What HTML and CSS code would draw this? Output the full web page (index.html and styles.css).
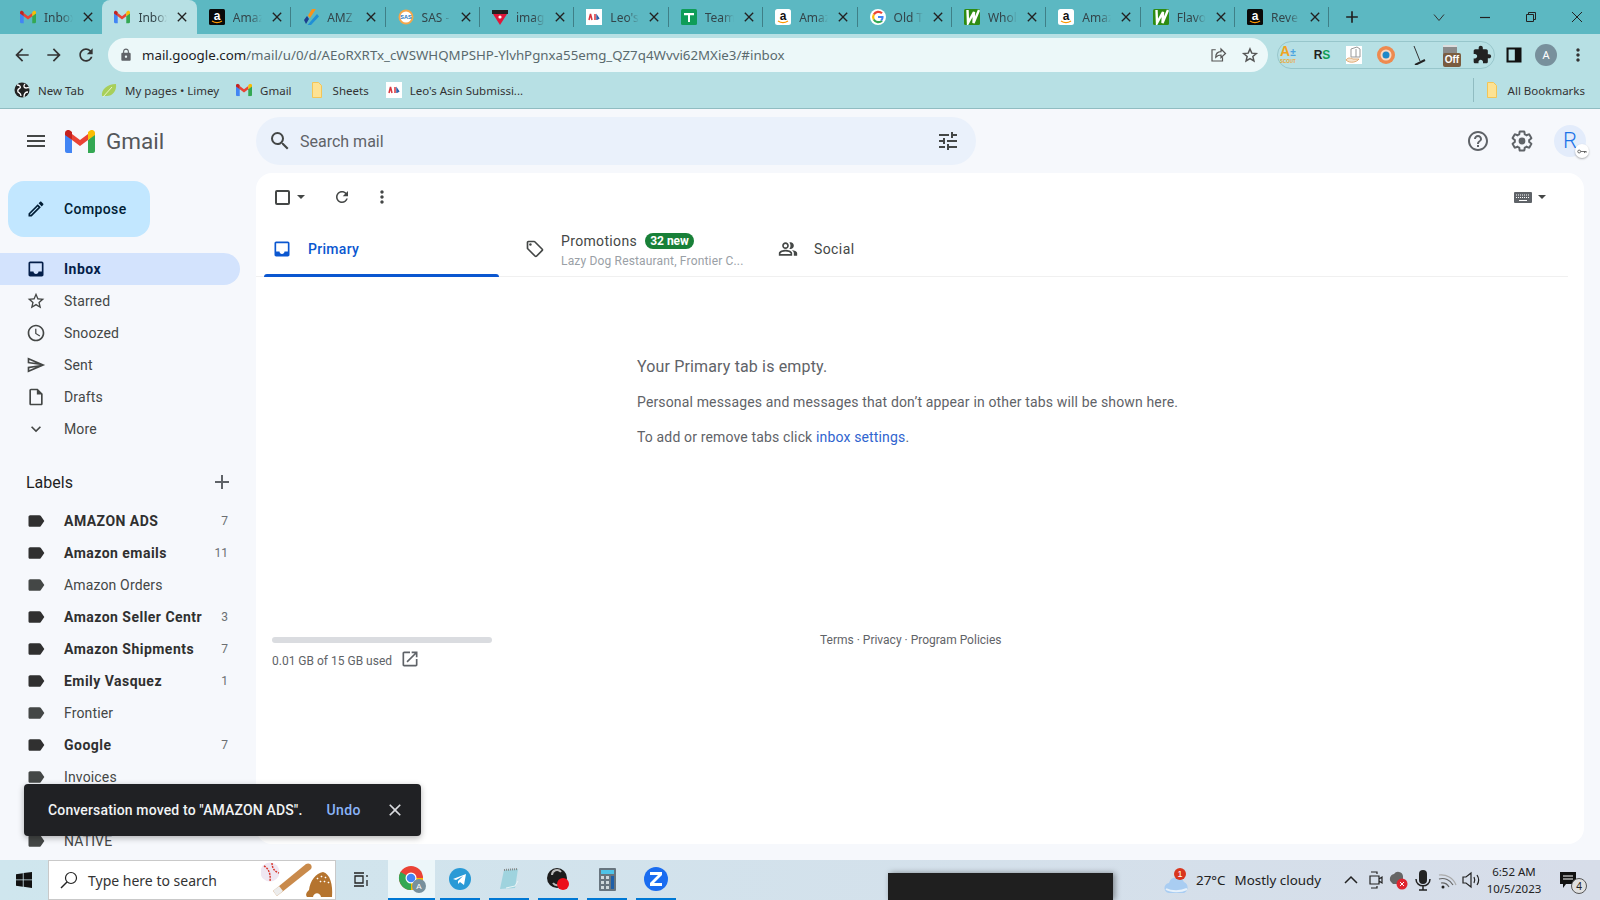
FILE: index.html
```html
<!DOCTYPE html>
<html lang="en">
<head>
    <meta charset="UTF-8">
    <title>Inbox - Gmail</title>
    <link rel="stylesheet" href="styles.css">
</head>
<body>
    <!-- icon sheet -->
    <svg class="icon-sheet" xmlns="http://www.w3.org/2000/svg">
        <symbol id="i-menu" viewBox="0 0 24 24"><path d="M3 18h18v-2H3v2zm0-5h18v-2H3v2zm0-7v2h18V6H3z"/></symbol>
        <symbol id="i-search" viewBox="0 0 24 24"><path d="M15.5 14h-.79l-.28-.27A6.471 6.471 0 0 0 16 9.5 6.5 6.5 0 1 0 9.5 16c1.61 0 3.09-.59 4.23-1.57l.27.28v.79l5 4.99L20.49 19l-4.99-5zm-6 0C7.01 14 5 11.99 5 9.5S7.01 5 9.5 5 14 7.01 14 9.5 11.99 14 9.5 14z"/></symbol>
        <symbol id="i-tune" viewBox="0 0 24 24"><path d="M3 17v2h6v-2H3zM3 5v2h10V5H3zm10 16v-2h8v-2h-8v-2h-2v6h2zM7 9v2H3v2h4v2h2V9H7zm14 4v-2H11v2h10zm-6-4h2V7h4V5h-4V3h-2v6z"/></symbol>
        <symbol id="i-edit" viewBox="0 0 24 24"><path d="M14.06 9.02l.92.92L5.92 19H5v-.92l9.06-9.06M17.66 3c-.25 0-.51.1-.7.29l-1.83 1.83 3.75 3.75 1.83-1.83c.39-.39.39-1.02 0-1.41l-2.34-2.34c-.2-.2-.45-.29-.71-.29zm-3.6 3.19L3 17.25V21h3.75L17.81 9.94l-3.75-3.75z"/></symbol>
        <symbol id="i-inbox" viewBox="0 0 24 24"><path d="M19 3H5c-1.1 0-2 .9-2 2v14c0 1.1.9 2 2 2h14c1.1 0 2-.9 2-2V5c0-1.1-.9-2-2-2zm0 12h-4c0 1.66-1.35 3-3 3s-3-1.34-3-3H5V5h14v10z"/></symbol>
        <symbol id="i-star" viewBox="0 0 24 24"><path d="M22 9.24l-7.19-.62L12 2 9.19 8.63 2 9.24l5.46 4.73L5.82 21 12 17.27 18.18 21l-1.63-7.03L22 9.24zM12 15.4l-3.76 2.27 1-4.28-3.32-2.88 4.38-.38L12 6.1l1.71 4.04 4.38.38-3.32 2.88 1 4.28L12 15.4z"/></symbol>
        <symbol id="i-clock" viewBox="0 0 24 24"><path d="M11.99 2C6.47 2 2 6.48 2 12s4.47 10 9.99 10C17.52 22 22 17.52 22 12S17.52 2 11.99 2zM12 20c-4.42 0-8-3.58-8-8s3.58-8 8-8 8 3.58 8 8-3.58 8-8 8zm.5-13H11v6l5.25 3.15.75-1.23-4.5-2.67z"/></symbol>
        <symbol id="i-send" viewBox="0 0 24 24"><path d="M4.01 6.03l7.51 3.22-7.52-1 .01-2.22m7.5 8.72L4 17.97v-2.22l7.51-1M2.01 3L2 10l15 2-15 2 .01 7L23 12 2.01 3z"/></symbol>
        <symbol id="i-draft" viewBox="0 0 24 24"><path d="M14 2H6c-1.1 0-1.99.9-1.99 2L4 20c0 1.1.89 2 1.99 2H18c1.1 0 2-.9 2-2V8l-6-6zM6 20V4h7v5h5v11H6z"/></symbol>
        <symbol id="i-expand" viewBox="0 0 24 24"><path d="M16.59 8.59L12 13.17 7.41 8.59 6 10l6 6 6-6z"/></symbol>
        <symbol id="i-label" viewBox="0 0 24 24"><path d="M17.63 5.84C17.27 5.33 16.67 5 16 5L5 5.01C3.9 5.01 3 5.9 3 7v10c0 1.1.9 1.99 2 1.99L16 19c.67 0 1.27-.33 1.63-.84L22 12l-4.37-6.16z"/></symbol>
        <symbol id="i-add" viewBox="0 0 24 24"><path d="M19 13h-6v6h-2v-6H5v-2h6V5h2v6h6v2z"/></symbol>
        <symbol id="i-close" viewBox="0 0 24 24"><path d="M19 6.41L17.59 5 12 10.59 6.41 5 5 6.41 10.59 12 5 17.59 6.41 19 12 13.41 17.59 19 19 17.59 13.41 12z"/></symbol>
        <symbol id="i-refresh" viewBox="0 0 24 24"><path d="M17.65 6.35C16.2 4.9 14.21 4 12 4c-4.42 0-7.99 3.58-7.99 8s3.57 8 7.99 8c3.73 0 6.84-2.55 7.73-6h-2.08c-.82 2.33-3.04 4-5.65 4-3.31 0-6-2.69-6-6s2.69-6 6-6c1.66 0 3.14.69 4.22 1.78L13 11h7V4l-2.35 2.35z"/></symbol>
        <symbol id="i-dots" viewBox="0 0 24 24"><path d="M12 8c1.1 0 2-.9 2-2s-.9-2-2-2-2 .9-2 2 .9 2 2 2zm0 2c-1.1 0-2 .9-2 2s.9 2 2 2 2-.9 2-2-.9-2-2-2zm0 6c-1.1 0-2 .9-2 2s.9 2 2 2 2-.9 2-2-.9-2-2-2z"/></symbol>
        <symbol id="i-tag" viewBox="0 0 24 24"><path d="M21.41 11.58l-9-9C12.05 2.22 11.55 2 11 2H4c-1.1 0-2 .9-2 2v7c0 .55.22 1.05.59 1.42l9 9c.36.36.86.58 1.41.58s1.05-.22 1.41-.59l7-7c.37-.36.59-.86.59-1.41s-.23-1.06-.59-1.42zM13 20.01L4 11V4h7v-.01l9 9-7 7.02z"/><circle cx="6.5" cy="6.5" r="1.5"/></symbol>
        <symbol id="i-people" viewBox="0 0 24 24"><path d="M16.67 13.13C18.04 14.06 19 15.32 19 17v3h4v-3c0-2.18-3.57-3.47-6.33-3.87zM15 12c2.21 0 4-1.79 4-4s-1.79-4-4-4c-.47 0-.91.1-1.33.24C14.5 5.27 15 6.58 15 8s-.5 2.73-1.33 3.76c.42.14.86.24 1.33.24zM9 12c2.21 0 4-1.79 4-4s-1.79-4-4-4-4 1.79-4 4 1.79 4 4 4zm0-6c1.1 0 2 .9 2 2s-.9 2-2 2-2-.9-2-2 .9-2 2-2zM9 13c-2.67 0-8 1.34-8 4v3h16v-3c0-2.66-5.33-4-8-4zm6 5H3v-.99C3.2 16.29 6.3 15 9 15s5.8 1.29 6 2v1z"/></symbol>
        <symbol id="i-help" viewBox="0 0 24 24"><path d="M11 18h2v-2h-2v2zm1-16C6.48 2 2 6.48 2 12s4.48 10 10 10 10-4.48 10-10S17.52 2 12 2zm0 18c-4.41 0-8-3.59-8-8s3.59-8 8-8 8 3.59 8 8-3.59 8-8 8zm0-14c-2.21 0-4 1.79-4 4h2c0-1.1.9-2 2-2s2 .9 2 2c0 2-3 1.75-3 5h2c0-2.25 3-2.5 3-5 0-2.21-1.79-4-4-4z"/></symbol>
        <symbol id="i-gear" viewBox="0 0 24 24"><path fill="none" stroke="currentColor" stroke-width="2" d="M19.14 12.94c.04-.3.06-.61.06-.94 0-.32-.02-.64-.07-.94l2.03-1.58c.18-.14.23-.41.12-.61l-1.92-3.32c-.12-.22-.37-.29-.59-.22l-2.39.96c-.5-.38-1.03-.7-1.62-.94l-.36-2.54c-.04-.24-.24-.41-.48-.41h-3.84c-.24 0-.43.17-.47.41l-.36 2.54c-.59.24-1.13.57-1.62.94l-2.39-.96c-.22-.08-.47 0-.59.22L2.74 8.87c-.12.21-.08.47.12.61l2.03 1.58c-.05.3-.09.63-.09.94s.02.64.07.94l-2.03 1.58c-.18.14-.23.41-.12.61l1.92 3.32c.12.22.37.29.59.22l2.39-.96c.5.38 1.03.7 1.62.94l.36 2.54c.05.24.24.41.48.41h3.84c.24 0 .44-.17.47-.41l.36-2.54c.59-.24 1.13-.56 1.62-.94l2.39.96c.22.08.47 0 .59-.22l1.92-3.32c.12-.22.07-.47-.12-.61l-2.01-1.58z"/><circle cx="12" cy="12" r="3.4"/></symbol>
        <symbol id="i-open" viewBox="0 0 24 24"><path d="M19 19H5V5h7V3H5c-1.11 0-2 .9-2 2v14c0 1.1.89 2 2 2h14c1.1 0 2-.9 2-2v-7h-2v7zM14 3v2h3.59l-9.83 9.83 1.41 1.41L19 6.41V10h2V3h-7z"/></symbol>
        <symbol id="i-back" viewBox="0 0 24 24"><path d="M20 11H7.83l5.59-5.59L12 4l-8 8 8 8 1.41-1.41L7.83 13H20v-2z"/></symbol>
        <symbol id="i-forward" viewBox="0 0 24 24"><path d="M12 4l-1.41 1.41L16.17 11H4v2h12.17l-5.58 5.59L12 20l8-8z"/></symbol>
        <symbol id="i-lock" viewBox="0 0 24 24"><path d="M18 8h-1V6c0-2.76-2.24-5-5-5S7 3.24 7 6v2H6c-1.1 0-2 .9-2 2v10c0 1.1.9 2 2 2h12c1.1 0 2-.9 2-2V10c0-1.1-.9-2-2-2zm-6 9c-1.1 0-2-.9-2-2s.9-2 2-2 2 .9 2 2-.9 2-2 2zm3.1-9H8.9V6c0-1.71 1.39-3.1 3.1-3.1 1.71 0 3.1 1.39 3.1 3.1v2z"/></symbol>
        <symbol id="i-puzzle" viewBox="0 0 24 24"><path d="M20.5 11H19V7c0-1.1-.9-2-2-2h-4V3.5C13 2.12 11.88 1 10.5 1S8 2.12 8 3.5V5H4c-1.1 0-1.99.9-1.99 2v3.8H3.5c1.49 0 2.7 1.21 2.7 2.7s-1.21 2.7-2.7 2.7H2V20c0 1.1.9 2 2 2h3.8v-1.5c0-1.49 1.21-2.7 2.7-2.7 1.49 0 2.7 1.21 2.7 2.7V22H17c1.1 0 2-.9 2-2v-4h1.5c1.38 0 2.5-1.12 2.5-2.5S21.88 11 20.5 11z"/></symbol>
        <symbol id="i-share" viewBox="0 0 24 24"><path fill="none" stroke="currentColor" stroke-width="1.6" d="M9 5H4v15h14v-5M9 15c0-5 3-7.500 7-7.500V4l6 6-6 5.500V12c-3 0-5 1-7 3z"/></symbol>
        <symbol id="i-star-line" viewBox="0 0 24 24"><path fill="none" stroke="currentColor" stroke-width="2" d="M12 4l2.400 5.500 6 .5-4.600 4 1.400 5.900L12 16.800 6.800 19.900 8.200 14 3.600 10l6-.5z"/></symbol>
        <symbol id="i-panel" viewBox="0 0 24 24"><path fill-rule="evenodd" d="M3 3h18v18H3zM5.500 5.500v13H13v-13z"/></symbol>

        <symbol id="f-gmail" viewBox="0 0 30 23">
            <path fill="#4285f4" d="M0 3v18c0 1 1 2 2 2h5V10z"/>
            <path fill="#34a853" d="M30 3v18c0 1-1 2-2 2h-5V10z"/>
            <path fill="#ea4335" d="M7 10v-6l8 6 8-6v6l-8 6z"/>
            <path fill="#c5221f" d="M0 3C0 .5 3-1 5 .5L7 2v8L0 5z"/>
            <path fill="#fbbc04" d="M30 3c0-2.500-3-4-5-2.500L23 2v8l7-5z"/>
        </symbol>
        <symbol id="f-amz-dark" viewBox="0 0 16 16">
            <rect width="16" height="16" rx="1.500" fill="#0a0a0a"/>
            <text x="8" y="10.500" font-size="12" font-weight="700" text-anchor="middle" fill="#fff" font-family="Liberation Sans">a</text>
            <path d="M3 12c3 2 7 2 10 0" fill="none" stroke="#f90" stroke-width="1.300"/>
        </symbol>
        <symbol id="f-amz-light" viewBox="0 0 16 16">
            <rect width="16" height="16" rx="2.500" fill="#fff"/>
            <text x="8" y="10.500" font-size="12" font-weight="700" text-anchor="middle" fill="#111" font-family="Liberation Sans">a</text>
            <path d="M3 12c3 2 7 2 10 0" fill="none" stroke="#f90" stroke-width="1.300"/>
        </symbol>
        <symbol id="f-amz-tool" viewBox="0 0 16 16">
            <path fill="#f7941d" d="M9 0h4L7 9 5 6.500z"/>
            <path fill="#1f8fd6" d="M14 5l2 2.500L8 16H4.500z"/>
            <path fill="#1b3f8f" d="M1 11l3-4 2 3-3 5z"/>
        </symbol>
        <symbol id="f-sas" viewBox="0 0 16 16">
            <circle cx="8" cy="8" r="7.500" fill="#f4a64a"/>
            <circle cx="8" cy="8" r="5.600" fill="#fff"/>
            <text x="8" y="10" font-size="5.500" font-weight="700" text-anchor="middle" fill="#1d75bc" font-family="Liberation Sans">SAS</text>
        </symbol>
        <symbol id="f-imag" viewBox="0 0 16 16">
            <path fill="#e0163a" d="M1 5h14L8 16z"/>
            <path fill="#231f20" d="M0 1h16v4H0z"/>
            <circle cx="8" cy="8" r="1.600" fill="#fff"/>
        </symbol>
        <symbol id="f-leo" viewBox="0 0 16 16">
            <rect width="16" height="16" fill="#fff"/>
            <path d="M3 11l1.500-6L6 11M9 5v6" fill="none" stroke="#d9363e" stroke-width="1.500"/>
            <path d="M11 11V7l2 3" fill="none" stroke="#2b5fa8" stroke-width="1.500"/>
        </symbol>
        <symbol id="f-team" viewBox="0 0 16 16">
            <rect width="16" height="16" rx="1.500" fill="#0f9d58"/>
            <path fill="#fff" d="M3 4h10v2.200H9V13H7V6.200H3z"/>
        </symbol>
        <symbol id="f-google" viewBox="0 0 16 16">
            <circle cx="8" cy="8" r="8" fill="#fff"/>
            <path fill="none" stroke="#ea4335" stroke-width="2.200" d="M12 4.300A5.200 5.200 0 0 0 3.800 5.500"/>
            <path fill="none" stroke="#fbbc04" stroke-width="2.200" d="M3.800 5.500a5.200 5.200 0 0 0 0 5"/>
            <path fill="none" stroke="#34a853" stroke-width="2.200" d="M3.800 10.500a5.200 5.200 0 0 0 8.200 1.200"/>
            <path fill="#4285f4" d="M8 7h5.500c.3 2-.3 3.700-1.500 5l-1.600-1.300c.6-.5 1-1.200 1.100-1.800H8z"/>
        </symbol>
        <symbol id="f-whole" viewBox="0 0 16 16">
            <rect width="16" height="16" rx="1.500" fill="#2e8b12"/>
            <path fill="none" stroke="#fff" stroke-width="2.400" d="M3.500 1L4 14 10 3l-.5 11L15 1"/>
        </symbol>
        <symbol id="f-folder" viewBox="0 0 16 16">
            <path fill="#fde293" stroke="#f3c557" d="M3.500 .5h6l3 3v12h-9z"/>
        </symbol>
    </svg>

    <!-- chrome tabs -->
    <div class="tabstrip">
        <div class="browser-tab"><svg class="fav"><use href="#f-gmail"/></svg><span class="tab-title">Inbox</span><svg class="tab-x"><use href="#i-close"/></svg></div>
        <div class="browser-tab is-active"><svg class="fav"><use href="#f-gmail"/></svg><span class="tab-title">Inbox</span><svg class="tab-x"><use href="#i-close"/></svg></div>
        <div class="browser-tab"><svg class="fav"><use href="#f-amz-dark"/></svg><span class="tab-title">Amaz</span><svg class="tab-x"><use href="#i-close"/></svg></div>
        <div class="browser-tab"><svg class="fav"><use href="#f-amz-tool"/></svg><span class="tab-title">AMZ</span><svg class="tab-x"><use href="#i-close"/></svg></div>
        <div class="browser-tab"><svg class="fav"><use href="#f-sas"/></svg><span class="tab-title">SAS -</span><svg class="tab-x"><use href="#i-close"/></svg></div>
        <div class="browser-tab"><svg class="fav"><use href="#f-imag"/></svg><span class="tab-title">imag</span><svg class="tab-x"><use href="#i-close"/></svg></div>
        <div class="browser-tab"><svg class="fav"><use href="#f-leo"/></svg><span class="tab-title">Leo's</span><svg class="tab-x"><use href="#i-close"/></svg></div>
        <div class="browser-tab"><svg class="fav"><use href="#f-team"/></svg><span class="tab-title">Team</span><svg class="tab-x"><use href="#i-close"/></svg></div>
        <div class="browser-tab"><svg class="fav"><use href="#f-amz-light"/></svg><span class="tab-title">Amaz</span><svg class="tab-x"><use href="#i-close"/></svg></div>
        <div class="browser-tab"><svg class="fav"><use href="#f-google"/></svg><span class="tab-title">Old T</span><svg class="tab-x"><use href="#i-close"/></svg></div>
        <div class="browser-tab"><svg class="fav"><use href="#f-whole"/></svg><span class="tab-title">Whol</span><svg class="tab-x"><use href="#i-close"/></svg></div>
        <div class="browser-tab"><svg class="fav"><use href="#f-amz-light"/></svg><span class="tab-title">Amaz</span><svg class="tab-x"><use href="#i-close"/></svg></div>
        <div class="browser-tab"><svg class="fav"><use href="#f-whole"/></svg><span class="tab-title">Flavo</span><svg class="tab-x"><use href="#i-close"/></svg></div>
        <div class="browser-tab"><svg class="fav"><use href="#f-amz-dark"/></svg><span class="tab-title">Reve</span><svg class="tab-x"><use href="#i-close"/></svg></div>
        <svg class="new-tab"><use href="#i-add"/></svg>
        <div class="window-controls">
            <svg viewBox="0 0 12 12"><path d="M1 3.500l5 6 5-6" fill="none" stroke="#333"/></svg>
            <svg viewBox="0 0 12 12"><path d="M1 6.500h10" stroke="#222" stroke-width="1.200"/></svg>
            <svg viewBox="0 0 12 12"><path d="M1.500 3.500h7v7h-7zM3.500 3.500v-2h7v7h-2" fill="none" stroke="#222"/></svg>
            <svg viewBox="0 0 12 12"><path d="M1 1l10 10M11 1L1 11" stroke="#222"/></svg>
        </div>
    </div>

    <!-- address bar -->
    <div class="toolbar">
        <svg class="nav-btn"><use href="#i-back"/></svg>
        <svg class="nav-btn"><use href="#i-forward"/></svg>
        <svg class="nav-btn"><use href="#i-refresh"/></svg>
        <div class="address">
            <svg class="lock"><use href="#i-lock"/></svg>
            <span class="url"><b>mail.google.com</b>/mail/u/0/d/AEoRXRTx_cWSWHQMPSHP-YlvhPgnxa55emg_QZ7q4Wvvi62MXie3/#inbox</span>
            <svg class="addr-icon"><use href="#i-share"/></svg>
            <svg class="addr-icon"><use href="#i-star-line"/></svg>
        </div>
        <div class="extensions">
            <span class="ext ext-ascout">A<em>±</em><small>SCOUT</small></span>
            <span class="ext ext-rs">R<i>S</i></span>
            <svg class="ext" viewBox="0 0 20 20"><rect x="2" y="1" width="16" height="18" fill="#fff"/><path d="M7 4l6-2 3 2v8H7z" fill="#fff" stroke="#999"/><path d="M12 4v8" stroke="#999"/><path d="M2 15c2-3 5-2 7-1h6c-2 3-9 5-13 1z" fill="#f6e3cd" stroke="#d99a5a" stroke-width=".8"/></svg>
            <svg class="ext" viewBox="0 0 20 20"><circle cx="10" cy="10" r="9" fill="#ee8a4f"/><circle cx="10" cy="10" r="5.500" fill="#f7d9c4"/><circle cx="10" cy="10" r="3.500" fill="#1e88c9"/></svg>
            <svg class="ext" viewBox="0 0 20 20"><path d="M6 1l6 15" stroke="#333"/><path d="M7 20l10-5" stroke="#222" stroke-width="2"/></svg>
            <span class="ext ext-off"><span class="cup"></span><span class="off">Off</span></span>
            <svg class="ext ext-puzzle"><use href="#i-puzzle"/></svg>
        </div>
        <svg class="nav-btn panel-btn"><use href="#i-panel"/></svg>
        <span class="chrome-avatar">A</span>
        <svg class="nav-btn"><use href="#i-dots"/></svg>
    </div>

    <!-- bookmarks -->
    <div class="bookmarks">
        <span class="bm"><svg viewBox="0 0 16 16"><circle cx="8" cy="8" r="7.500" fill="#222"/><path d="M3 3c3 0 4 2 3 3S3 7 4 10c1 1 3 1 3 4M11 2c-2 2-1 4 1 4s2-1 3 0M10 15c0-3 1-5 4-5" fill="none" stroke="#fff" stroke-width="1.300"/></svg>New Tab</span>
        <span class="bm"><svg viewBox="0 0 16 16"><path d="M1 14C0 8 6 2 15 2c1 7-4 13-11 12z" fill="#a8cf5a"/><path d="M2 15L11 5" stroke="#e8f5c8"/></svg>My pages • Limey</span>
        <span class="bm"><svg viewBox="0 0 30 23"><use href="#f-gmail"/></svg>Gmail</span>
        <span class="bm"><svg><use href="#f-folder"/></svg>Sheets</span>
        <span class="bm"><svg><use href="#f-leo"/></svg>Leo's Asin Submissi...</span>
        <span class="bm bm-all"><svg><use href="#f-folder"/></svg>All Bookmarks</span>
    </div>

    <div class="gmail">
        <header class="gm-header">
            <div class="brand">
                <svg class="hamburger"><use href="#i-menu"/></svg>
                <svg class="logo"><use href="#f-gmail"/></svg>
                <span class="wordmark">Gmail</span>
            </div>
            <div class="searchbar">
                <svg class="search-icon"><use href="#i-search"/></svg>
                <span class="search-text">Search mail</span>
                <svg class="tune-icon"><use href="#i-tune"/></svg>
            </div>
            <div class="account">
                <svg class="acct-icon"><use href="#i-help"/></svg>
                <svg class="acct-icon"><use href="#i-gear"/></svg>
                <span class="avatar">R
                    <span class="key"><svg viewBox="0 0 16 8"><circle cx="3.500" cy="4" r="2.300" fill="none" stroke="#444" stroke-width="1.200"/><path d="M6 4h9M12 4v2.500M14.500 4v2" stroke="#444" stroke-width="1.200"/></svg></span>
                </span>
            </div>
        </header>

        <div class="gm-body">
            <aside class="sidebar">
                <button class="compose"><svg><use href="#i-edit"/></svg>Compose</button>
                <ul class="nav-list">
                    <li class="nav-row is-current"><svg><use href="#i-inbox"/></svg>Inbox</li>
                    <li class="nav-row"><svg><use href="#i-star"/></svg>Starred</li>
                    <li class="nav-row"><svg><use href="#i-clock"/></svg>Snoozed</li>
                    <li class="nav-row"><svg><use href="#i-send"/></svg>Sent</li>
                    <li class="nav-row"><svg><use href="#i-draft"/></svg>Drafts</li>
                    <li class="nav-row"><svg><use href="#i-expand"/></svg>More</li>
                </ul>
                <div class="labels-head"><span>Labels</span><svg><use href="#i-add"/></svg></div>
                <ul class="nav-list">
                    <li class="nav-row unread"><svg><use href="#i-label"/></svg>AMAZON ADS<span class="count">7</span></li>
                    <li class="nav-row unread"><svg><use href="#i-label"/></svg>Amazon emails<span class="count">11</span></li>
                    <li class="nav-row"><svg><use href="#i-label"/></svg>Amazon Orders</li>
                    <li class="nav-row unread"><svg><use href="#i-label"/></svg>Amazon Seller Centr<span class="count">3</span></li>
                    <li class="nav-row unread"><svg><use href="#i-label"/></svg>Amazon Shipments<span class="count">7</span></li>
                    <li class="nav-row unread"><svg><use href="#i-label"/></svg>Emily Vasquez<span class="count">1</span></li>
                    <li class="nav-row"><svg><use href="#i-label"/></svg>Frontier</li>
                    <li class="nav-row unread"><svg><use href="#i-label"/></svg>Google<span class="count">7</span></li>
                    <li class="nav-row"><svg><use href="#i-label"/></svg>Invoices</li>
                    <li class="nav-row"></li>
                    <li class="nav-row"><svg><use href="#i-label"/></svg>NATIVE</li>
                </ul>
            </aside>

            <main class="panel">
                <div class="mail-tools">
                    <span class="checkbox"></span>
                    <span class="caret"></span>
                    <svg class="refresh"><use href="#i-refresh"/></svg>
                    <svg class="more"><use href="#i-dots"/></svg>
                    <span class="kbd">
                        <svg viewBox="0 0 18 11"><rect width="18" height="11" rx="1" fill="#5f6368"/><path d="M2 3h14M2 5.500h14" stroke="#fff" stroke-width="1" stroke-dasharray="1 1"/><path d="M5 8.500h8" stroke="#fff"/></svg>
                        <span class="caret"></span>
                    </span>
                </div>
                <div class="mail-tabs">
                    <div class="mail-tab tab-primary"><svg><use href="#i-inbox"/></svg><span>Primary</span></div>
                    <div class="mail-tab tab-promo">
                        <svg><use href="#i-tag"/></svg>
                        <div class="promo-text">
                            <div class="promo-top"><span>Promotions</span><span class="badge">32 new</span></div>
                            <div class="promo-sub">Lazy Dog Restaurant, Frontier C...</div>
                        </div>
                    </div>
                    <div class="mail-tab tab-social"><svg><use href="#i-people"/></svg><span>Social</span></div>
                </div>
                <div class="empty">
                    <h2>Your Primary tab is empty.</h2>
                    <p>Personal messages and messages that don’t appear in other tabs will be shown here.</p>
                    <p class="second">To add or remove tabs click <a href="#">inbox settings</a>.</p>
                </div>
                <div class="mail-foot">
                    <div class="storage">
                        <div class="storage-bar"></div>
                        <div class="storage-text">0.01 GB of 15 GB used<svg><use href="#i-open"/></svg></div>
                    </div>
                    <div class="foot-links">Terms · Privacy · Program Policies</div>
                </div>
            </main>
        </div>

        <div class="toast">
            <span>Conversation moved to "AMAZON ADS".</span>
            <a href="#">Undo</a>
            <svg><use href="#i-close"/></svg>
        </div>
    </div>

    <!-- windows taskbar -->
    <footer class="taskbar">
        <div class="start"><svg viewBox="0 0 16 16"><path d="M0 2.200l6.800-1v6.300H0zM7.600 1.100L16 0v7.500H7.600zM0 8.300h6.800v6.500l-6.800-1zM7.600 8.300H16V16l-8.400-1.200z"/></svg></div>
        <div class="win-search">
            <svg class="win-glass" viewBox="0 0 18 18"><circle cx="11" cy="7" r="5.500" fill="none" stroke="#222" stroke-width="1.200"/><path d="M7 11l-6 6" stroke="#222" stroke-width="1.400"/></svg>
            <span>Type here to search</span>
            <svg class="doodle" viewBox="0 0 72 40">
                <circle cx="9" cy="12" r="9.500" fill="#efe7f2"/>
                <path d="M3 6c4 2 7 7 6 15M11 3c0 5 3 9 7 10" fill="none" stroke="#d8352a" stroke-width="1.400" stroke-dasharray="2 1"/>
                <path d="M12 31l4 5 34-27c2-3-1-7-5-5z" fill="#c98a4b"/>
                <path d="M12 31l4 5 6-5-4-5z" fill="#ececec"/>
                <path d="M46 37c-2-3 0-5 2-7 1-9 7-17 14-18 7 2 10 12 9 25H60c-1-5-7-5-8 0z" fill="#b5742f"/>
                <path d="M56 18l1 1M60 16l1 1M64 17l1 1M59 21l1 1M63 21l1 1M67 22l1 1" stroke="#fff" stroke-width="1.600"/>
            </svg>
        </div>
        <div class="taskview"><svg viewBox="0 0 20 20"><path d="M4 3h10M4 16h10M5 6h8v7H5zM17 5v2M17 10v6" fill="none" stroke="#222" stroke-width="1.300"/></svg></div>
        <div class="app app-active">
            <svg viewBox="0 0 28 28">
                <circle cx="13" cy="13" r="12" fill="#ea4335"/>
                <path d="M13 13L2.600 7A12 12 0 0 0 13 25z" fill="#34a853"/>
                <path d="M13 13h12a12 12 0 0 1-12 12z" fill="#fbbc04"/>
                <circle cx="13" cy="13" r="5.500" fill="#fff"/><circle cx="13" cy="13" r="4.300" fill="#4285f4"/>
                <circle cx="21" cy="21" r="7" fill="#78909c"/>
                <text x="21" y="24" font-size="8" text-anchor="middle" fill="#fff" font-family="Liberation Sans">A</text>
            </svg>
        </div>
        <div class="app"><svg viewBox="0 0 24 24"><circle cx="12" cy="12" r="11" fill="#2a9ad6"/><path d="M5 12l13-5-2 11-4-3-2 2v-3l5-5-7 4z" fill="#fff"/></svg></div>
        <div class="app"><svg viewBox="0 0 24 24"><path d="M7 3l14-1-3 19-15 1z" fill="#9fd3de"/><path d="M7 3l14-1" stroke="#888" stroke-width="2" stroke-dasharray="1 1"/><path d="M9 21l9-2 3-5" fill="none" stroke="#e8f4f6"/></svg></div>
        <div class="app"><svg viewBox="0 0 24 24"><circle cx="11" cy="11" r="10" fill="#1c1c1c"/><path d="M6 8a5 5 0 0 1 9-3M16 14a5 5 0 0 1-9 2" fill="none" stroke="#bbb" stroke-width="2"/><circle cx="17" cy="17" r="6" fill="#ec0f1a"/></svg></div>
        <div class="app"><svg viewBox="0 0 24 24"><rect x="4" y="1" width="17" height="23" rx="1" fill="#68757f"/><rect x="6" y="3" width="13" height="4" fill="#4fc3e8"/><path d="M6 9h3v3H6zM11 9h3v3h-3zM6 14h3v3H6zM11 14h3v3h-3zM6 19h3v3H6zM11 19h3v3h-3z" fill="#cfd8dc"/><path d="M16 9h3v13h-3z" fill="#1e5fa8"/></svg></div>
        <div class="app"><svg viewBox="0 0 24 24"><circle cx="12" cy="12" r="12" fill="#1a6cf0"/><path d="M6 5h12v3l-8 8h8v3H6v-3l8-8H6z" fill="#fff"/></svg></div>

        <div class="desktop-thumb"></div>

        <div class="tray">
            <span class="weather">
                <svg viewBox="0 0 24 30"><path d="M6 28a5 5 0 0 1-1-10 8 8 0 0 1 15-1 6 6 0 0 1 0 11z" fill="#a9cdf2"/><path d="M2 24c5 3 15 3 21 0" fill="none" stroke="#e6f1fb" stroke-width="2"/><circle cx="16" cy="9" r="6" fill="#d9361e"/><text x="16" y="12" font-size="9" text-anchor="middle" fill="#fff" font-family="Liberation Sans">1</text></svg>
                <span class="temp">27°C</span>
                <span>Mostly cloudy</span>
            </span>
            <svg class="tray-icon" viewBox="0 0 24 24"><path d="M6 15l6-6 6 6" fill="none" stroke="#222" stroke-width="1.500"/></svg>
            <svg class="tray-icon" viewBox="0 0 24 24"><path d="M8 4h6v2M14 18v2H8M7 8h9v8H7zM16 11l3-2v6l-3-2" fill="none" stroke="#222" stroke-width="1.200"/></svg>
            <svg class="tray-icon" viewBox="0 0 24 24"><path d="M5 15a5 5 0 0 1 2-9 5 5 0 0 1 9 2v8H6z" fill="#666"/><circle cx="15" cy="16" r="5.500" fill="#e0252f"/><path d="M13 14l4 4M17 14l-4 4" stroke="#fff"/></svg>
            <svg class="tray-icon" viewBox="0 0 24 24"><rect x="8" y="2" width="8" height="14" rx="4" fill="#222"/><path d="M5 11c0 9 14 9 14 0M12 18v4M8 22h8" fill="none" stroke="#222" stroke-width="1.500"/></svg>
            <svg class="tray-icon" viewBox="0 0 24 24"><path d="M4 11a12 12 0 0 1 14 6M6 15a8 8 0 0 1 8 4" fill="none" stroke="#666" stroke-width="1.200"/><path d="M4 7a16 16 0 0 1 17 10" fill="none" stroke="#aaa" stroke-width="1.200"/><circle cx="8" cy="19" r="1.500" fill="#222"/></svg>
            <svg class="tray-icon" viewBox="0 0 24 24"><path d="M4 9h3l5-4v14l-5-4H4z" fill="none" stroke="#222" stroke-width="1.200"/><path d="M15 9c1 2 1 4 0 6M18 7c2 3 2 7 0 10" fill="none" stroke="#222" stroke-width="1.200"/></svg>
            <div class="clock"><span>6:52 AM</span><span>10/5/2023</span></div>
            <div class="notif">
                <svg viewBox="0 0 18 18"><path d="M1 1h16v12H7l-3 4v-4H1z" fill="#111"/><path d="M4 5h10M4 8h10" stroke="#fff"/></svg>
                <span class="notif-count">4</span>
            </div>
        </div>
    </footer>
</body>
</html>
```

FILE: styles.css
```css
* {
    box-sizing: border-box;
}

html, body {
    margin: 0;
    padding: 0;
    width: 1600px;
    height: 900px;
    overflow: hidden;
}

body {
    display: flex;
    flex-direction: column;
    font-family: Roboto, 'Liberation Sans', sans-serif;
    background-color: #f6f8fc;
    color: #444746;
}

svg {
    display: block;
    fill: currentColor;
    flex: none;
}

.icon-sheet {
    position: absolute;
    width: 0;
    height: 0;
}

/* Chrome tab strip */
.tabstrip {
    display: flex;
    align-items: center;
    height: 34px;
    padding-left: 8px;
    background-color: #5cb8c2;
    font-family: 'Noto Sans', sans-serif;
}

.browser-tab {
    display: flex;
    align-items: center;
    width: 94.4px;
    height: 34px;
    padding-left: 12px;
    flex: none;
    background: linear-gradient(#3f7f87, #3f7f87) right center / 1px 20px no-repeat;
}

.browser-tab:first-child {
    background: none;
}

.browser-tab.is-active {
    background: #b7e0e4;
    border-radius: 8px 8px 0 0;
}

.fav {
    width: 16px;
    height: 16px;
}

.tab-title {
    width: 29px;
    margin-left: 8px;
    font-size: 12px;
    white-space: nowrap;
    overflow: hidden;
    color: #33454a;
    -webkit-mask-image: linear-gradient(to right, #000 60%, transparent);
    mask-image: linear-gradient(to right, #000 60%, transparent);
}

.tab-x {
    width: 16px;
    height: 16px;
    margin-left: 7px;
    color: #222;
}

.new-tab {
    width: 20px;
    height: 20px;
    margin-left: 13px;
    color: #222;
}

.window-controls {
    display: flex;
    align-items: center;
    gap: 34px;
    margin-left: auto;
    padding-right: 17px;
}

.window-controls svg {
    width: 12px;
    height: 12px;
}

/* address bar */
.toolbar {
    display: flex;
    align-items: center;
    height: 40px;
    padding-top: 2px;
    padding-left: 6px;
    background-color: #b7e0e4;
    color: #333;
}

.nav-btn {
    width: 32px;
    height: 20px;
    color: #333;
}

.address {
    display: flex;
    align-items: center;
    width: 1160px;
    height: 34px;
    margin-left: 6px;
    padding: 0 9px 0 11px;
    background-color: #ecf8f9;
    border-radius: 17px;
}

.lock {
    width: 14px;
    height: 14px;
    color: #5f6368;
}

.url {
    flex: 1;
    margin-left: 9px;
    font-family: 'Noto Sans', sans-serif;
    font-size: 13.3px;
    color: #5a6a6e;
    white-space: nowrap;
}

.url b {
    font-weight: 400;
    color: #202124;
}

.addr-icon {
    width: 18px;
    height: 18px;
    margin-left: 14px;
    color: #555;
}

.extensions {
    display: flex;
    align-items: center;
    gap: 12px;
    width: 218px;
    height: 28px;
    margin: 0 3px 0 9px;
    padding-left: 2px;
    border: 1px solid #97c6cb;
    border-radius: 14px;
}

.ext {
    position: relative;
    display: block;
    width: 20px;
    height: 20px;
    flex: none;
}

.ext-ascout {
    font: 700 14px/13px 'Liberation Sans', sans-serif;
    color: #f0a41f;
    text-align: left;
}

.ext-ascout em {
    font-style: normal;
    font-size: 10px;
    color: #4aa3df;
}

.ext-ascout small {
    display: block;
    font-size: 4.5px;
    line-height: 5px;
}

.ext-rs {
    font: 700 12px/20px 'Liberation Sans', sans-serif;
    color: #222;
    text-align: center;
}

.ext-rs i {
    font-style: normal;
    color: #0f9d58;
}

.cup {
    display: block;
    width: 14px;
    height: 12px;
    margin: 0 3px;
    background-color: #8a8a8a;
    border-top: 2px solid #ddd;
    border-radius: 0 0 3px 3px;
}

.off {
    position: absolute;
    left: 3px;
    top: 8px;
    width: 18px;
    height: 14px;
    background-color: #7a5c40;
    border-radius: 2px;
    color: #fff;
    font: 700 10px/14px 'Liberation Sans', sans-serif;
    text-align: center;
}

.ext-puzzle {
    color: #222;
}

.panel-btn {
    color: #111;
}

.chrome-avatar {
    width: 22px;
    height: 22px;
    margin: 0 5px;
    border-radius: 50%;
    background-color: #78909c;
    color: #fff;
    font: 11px/22px 'Noto Sans', sans-serif;
    text-align: center;
}

/* bookmarks bar */
.bookmarks {
    display: flex;
    align-items: center;
    gap: 17px;
    height: 35px;
    padding: 0 15px 2px 14px;
    background-color: #b7e0e4;
    border-bottom: 1px solid #90bcc1;
    font-family: 'Noto Sans', sans-serif;
    font-size: 11.5px;
    color: #333;
}

.bm {
    display: flex;
    align-items: center;
    gap: 8px;
    white-space: nowrap;
}

.bm svg {
    width: 16px;
    height: 16px;
}

.bm-all {
    margin-left: auto;
    padding-left: 10px;
    border-left: 1px solid #90bcc1;
    height: 24px;
}

/* gmail */
.gmail {
    position: relative;
    display: flex;
    flex-direction: column;
    flex: 1;
    min-height: 0;
}

.gm-header {
    display: flex;
    align-items: center;
    height: 64px;
    flex: none;
}

.brand {
    display: flex;
    align-items: center;
    width: 256px;
    padding-left: 24px;
}

.hamburger {
    width: 24px;
    height: 24px;
    color: #444746;
}

.logo {
    width: 30px;
    height: 23px;
    margin-left: 17px;
}

.wordmark {
    margin-left: 11px;
    font-size: 22.5px;
    color: #54575a;
}

.searchbar {
    display: flex;
    align-items: center;
    width: 720px;
    height: 48px;
    padding: 0 16px 0 12px;
    background-color: #eaf1fb;
    border-radius: 24px;
}

.search-icon,
.tune-icon {
    width: 24px;
    height: 24px;
    color: #444746;
}

.search-text {
    flex: 1;
    margin-left: 8px;
    font-size: 16px;
    color: #5f6368;
}

.account {
    display: flex;
    align-items: center;
    gap: 20px;
    margin-left: auto;
    padding-right: 14px;
}

.acct-icon {
    width: 24px;
    height: 24px;
    color: #5f6368;
}

.avatar {
    position: relative;
    width: 32px;
    height: 32px;
    border-radius: 50%;
    background-color: #e3ecfb;
    color: #1a73e8;
    font-size: 22px;
    font-weight: 300;
    line-height: 32px;
    text-align: center;
}

.key {
    position: absolute;
    right: -3px;
    bottom: -1px;
    display: flex;
    align-items: center;
    justify-content: center;
    width: 14px;
    height: 14px;
    border-radius: 50%;
    background-color: #fff;
    box-shadow: 0 1px 2px rgba(0, 0, 0, 0.3);
}

.key svg {
    width: 10px;
    height: 5px;
}

.gm-body {
    display: flex;
    flex: 1;
    min-height: 0;
}

.sidebar {
    width: 256px;
    flex: none;
    overflow: hidden;
}

.compose {
    display: flex;
    align-items: center;
    gap: 18px;
    width: 142px;
    height: 56px;
    margin: 8px 0 16px 8px;
    padding: 0 0 0 18px;
    border: none;
    border-radius: 16px;
    background-color: #c2e7ff;
    color: #001d35;
    font-family: Roboto, sans-serif;
    font-size: 14px;
    font-weight: 500;
    letter-spacing: 0.4px;
}

.compose svg {
    width: 20px;
    height: 20px;
}

.nav-list {
    list-style: none;
    margin: 0;
    padding: 0;
}

.nav-row {
    display: flex;
    align-items: center;
    gap: 18px;
    width: 240px;
    height: 32px;
    padding: 0 12px 0 26px;
    font-size: 14px;
    letter-spacing: 0.15px;
    color: #444746;
    white-space: nowrap;
}

.nav-row svg {
    width: 20px;
    height: 20px;
}

.nav-row.is-current {
    background-color: #d3e3fd;
    border-radius: 0 16px 16px 0;
    color: #041e49;
    font-weight: 700;
    letter-spacing: 0.5px;
}

.nav-row.unread {
    color: #303030;
    font-weight: 700;
    letter-spacing: 0.47px;
}

.count {
    margin-left: auto;
    font-size: 12px;
    font-weight: 400;
    letter-spacing: 0;
    color: #6b6f72;
}

.labels-head {
    display: flex;
    align-items: center;
    justify-content: space-between;
    width: 240px;
    height: 32px;
    margin: 21px 0 7px;
    padding: 0 6px 0 26px;
    font-size: 16px;
    color: #1f1f1f;
}

.labels-head svg {
    width: 24px;
    height: 24px;
    color: #5f6368;
}

/* main panel */
.panel {
    flex: 1;
    margin: 0 16px 16px 0;
    padding-right: 16px;
    background-color: #fff;
    border-radius: 16px;
}

.mail-tools {
    display: flex;
    align-items: center;
    height: 48px;
    padding-left: 19px;
    color: #444746;
}

.checkbox {
    width: 15px;
    height: 15px;
    border: 2px solid #444746;
    border-radius: 2px;
}

.caret {
    width: 0;
    height: 0;
    border-left: 4.5px solid transparent;
    border-right: 4.5px solid transparent;
    border-top: 4.5px solid #444746;
}

.mail-tools > .caret {
    margin-left: 7px;
}

.refresh {
    width: 18px;
    height: 18px;
    margin-left: 28px;
}

.more {
    width: 20px;
    height: 20px;
    margin-left: 21px;
}

.kbd {
    display: flex;
    align-items: center;
    gap: 6px;
    margin-left: auto;
    padding-right: 22px;
}

.kbd svg {
    width: 18px;
    height: 11px;
}

.mail-tabs {
    display: flex;
    height: 56px;
    padding-left: 8px;
    border-bottom: 1px solid #f0f0f0;
}

.mail-tab {
    position: relative;
    display: flex;
    align-items: center;
    gap: 16px;
    font-size: 14px;
    color: #444746;
}

.mail-tab > svg {
    width: 20px;
    height: 20px;
}

.tab-primary {
    width: 235px;
    padding-left: 8px;
    color: #0b57d0;
    font-weight: 500;
    letter-spacing: 0.3px;
}

.tab-primary::after {
    content: "";
    position: absolute;
    left: 0;
    right: 0;
    bottom: -1px;
    height: 3px;
    background-color: #0b57d0;
    border-radius: 3px 3px 0 0;
}

.tab-promo {
    width: 265px;
    padding-left: 26px;
}

.promo-text {
    padding-top: 4px;
}

.tab-social {
    padding-left: 14px;
    letter-spacing: 0.4px;
}

.promo-top {
    display: flex;
    align-items: center;
    gap: 8px;
    letter-spacing: 0.35px;
    line-height: 16px;
}

.badge {
    height: 16px;
    padding: 0 5px;
    background-color: #188038;
    border-radius: 8px;
    color: #fff;
    font-size: 12px;
    font-weight: 700;
    letter-spacing: 0;
    line-height: 16px;
}

.promo-sub {
    margin-top: 4px;
    font-size: 12px;
    letter-spacing: 0.17px;
    line-height: 16px;
    color: #9aa0a6;
    white-space: nowrap;
}

.empty {
    margin: 78px 0 0 381px;
    font-size: 14px;
    letter-spacing: 0.15px;
    color: #5f6368;
}

.empty h2 {
    margin: 0;
    font-size: 16px;
    font-weight: 400;
    line-height: 24px;
}

.empty p {
    margin: 13px 0 0;
    line-height: 20px;
}

.empty p.second {
    margin-top: 15px;
}

.empty a {
    color: #2f64cf;
    text-decoration: none;
}

.mail-foot {
    display: flex;
    margin-top: 185px;
    font-size: 12px;
    line-height: 16px;
    color: #5f6368;
}

.storage {
    width: 220px;
    margin-left: 16px;
    padding-top: 5px;
}

.storage-bar {
    height: 6px;
    background-color: #dadce0;
    border-radius: 3px;
}

.storage-text {
    display: flex;
    align-items: center;
    gap: 8px;
    margin-top: 9px;
}

.storage-text svg {
    width: 20px;
    height: 20px;
    margin-top: -3px;
}

.foot-links {
    margin-left: 328px;
}

.toast {
    position: absolute;
    left: 24px;
    bottom: 24px;
    display: flex;
    align-items: center;
    width: 397px;
    height: 52px;
    padding-left: 24px;
    background-color: #202124;
    border-radius: 4px;
    box-shadow: 0 2px 6px rgba(0, 0, 0, 0.3);
    color: #f1f3f4;
    font-size: 14px;
    font-weight: 500;
    letter-spacing: 0.15px;
}

.toast a {
    margin-left: 24px;
    color: #8ab4f8;
    letter-spacing: 0.4px;
    text-decoration: none;
}

.toast svg {
    width: 20px;
    height: 20px;
    margin-left: auto;
    margin-right: 16px;
    color: #dadce0;
}

/* windows taskbar */
.taskbar {
    display: flex;
    height: 40px;
    flex: none;
    background: linear-gradient(to right, #cfe6ee, #d7dde9);
    font-family: 'Noto Sans', sans-serif;
    color: #222;
}

.start {
    display: flex;
    align-items: center;
    justify-content: center;
    width: 48px;
    color: #111;
}

.start svg {
    width: 16px;
    height: 16px;
}

.win-search {
    display: flex;
    align-items: center;
    width: 288px;
    padding-left: 11px;
    background-color: #fff;
    border: 1px solid #c9c9c9;
    font-size: 14px;
    color: #333;
    overflow: hidden;
}

.win-glass {
    width: 18px;
    height: 18px;
    margin-right: 10px;
}

.doodle {
    width: 72px;
    height: 40px;
    margin-left: auto;
    margin-right: 2px;
}

.taskview {
    display: flex;
    align-items: center;
    justify-content: center;
    width: 48px;
}

.taskview svg {
    width: 20px;
    height: 20px;
}

.app {
    display: flex;
    align-items: center;
    justify-content: center;
    width: 40px;
    margin-right: 9px;
    border-bottom: 2px solid #0078d4;
}

.app svg {
    width: 24px;
    height: 26px;
}

.app-active {
    width: 47px;
    margin-left: 4px;
    margin-right: 5px;
    background-color: #ecf6f9;
}

.app-active svg {
    width: 28px;
    height: 28px;
}

.desktop-thumb {
    align-self: flex-end;
    width: 225px;
    height: 27px;
    margin-left: 203px;
    background-color: #1f1f1f;
    box-shadow: 2px 0 6px rgba(0, 0, 0, 0.4);
}

.tray {
    display: flex;
    align-items: center;
    margin-left: auto;
}

.weather {
    display: flex;
    align-items: center;
    width: 175px;
    font-size: 13.4px;
}

.weather svg {
    width: 24px;
    height: 30px;
    margin-right: 8px;
}

.temp {
    margin-right: 9px;
}

.tray-icon {
    width: 24px;
    height: 24px;
}

.clock {
    display: flex;
    flex-direction: column;
    align-items: center;
    gap: 2px;
    width: 62px;
    font-size: 11.5px;
    line-height: 15px;
}

.notif {
    position: relative;
    display: flex;
    justify-content: center;
    width: 46px;
    margin-right: 9px;
}

.notif svg {
    width: 18px;
    height: 18px;
}

.notif-count {
    position: absolute;
    left: 26px;
    top: 7px;
    width: 16px;
    height: 16px;
    border: 1px solid #555;
    border-radius: 50%;
    background-color: #e0e0e0;
    font-size: 10px;
    line-height: 14px;
    text-align: center;
}
```
